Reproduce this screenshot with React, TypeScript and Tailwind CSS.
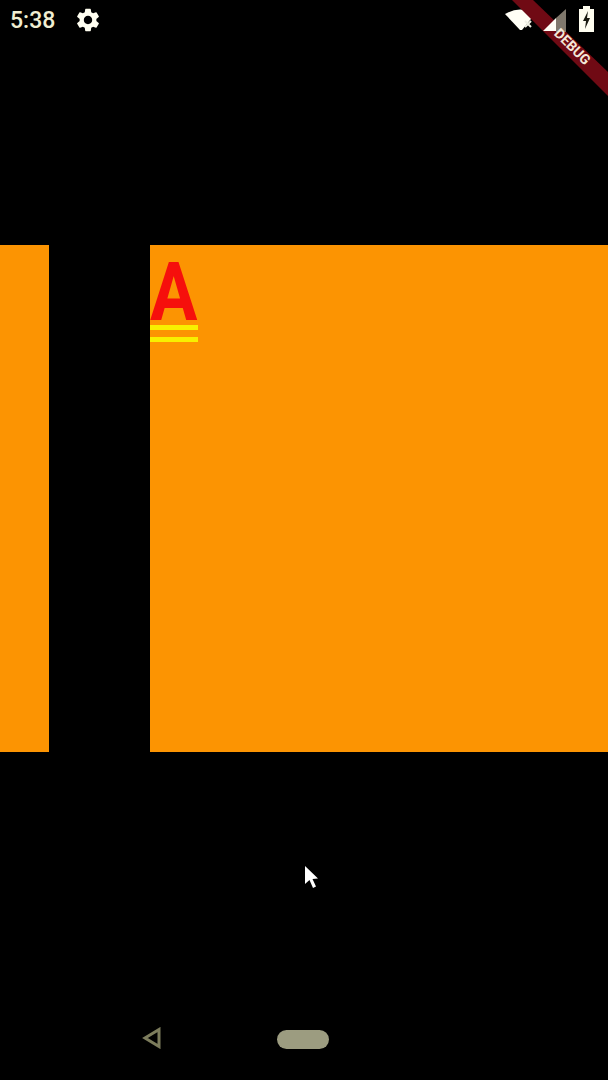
export default function App() {
  return (
    <div className="relative flex h-[1080px] w-[608px] flex-col overflow-hidden bg-black font-['Roboto',sans-serif]">
      <div className="h-[245px] shrink-0">
        <div className="flex h-[40px] items-center pl-[10px]">
          <span className="text-[23px] font-medium leading-none text-[#f0eed2]">5:38</span>
          <svg className="ml-[19px]" width="28" height="28" viewBox="0 0 24 24" fill="#fffef0">
            <path d="M19.14 12.94c.04-.3.06-.61.06-.94 0-.32-.02-.64-.07-.94l2.03-1.58a.49.49 0 0 0 .12-.61l-1.92-3.32a.488.488 0 0 0-.59-.22l-2.39.96c-.5-.38-1.03-.7-1.62-.94l-.36-2.54a.484.484 0 0 0-.48-.41h-3.84c-.24 0-.43.17-.47.41l-.36 2.54c-.59.24-1.13.57-1.62.94l-2.39-.96c-.22-.08-.47 0-.59.22L2.74 8.87c-.12.21-.08.47.12.61l2.03 1.58c-.05.3-.09.63-.09.94s.02.64.07.94l-2.03 1.58a.49.49 0 0 0-.12.61l1.92 3.32c.12.22.37.29.59.22l2.39-.96c.5.38 1.03.7 1.62.94l.36 2.54c.05.24.24.41.48.41h3.84c.24 0 .44-.17.47-.41l.36-2.54c.59-.24 1.13-.56 1.62-.94l2.39.96c.22.08.47 0 .59-.22l1.92-3.32c.12-.22.07-.47-.12-.61l-2.01-1.58zM12 15.6c-1.98 0-3.6-1.62-3.6-3.6s1.62-3.6 3.6-3.6 3.6 1.62 3.6 3.6-1.62 3.6-3.6 3.6z" />
          </svg>
        </div>
      </div>

      <div className="flex h-[507px] shrink-0 gap-[101px]">
        <div className="w-[49px] bg-[#fc9402]" />
        <div className="flex-1 bg-[#fc9402]">
          <div className="flex w-[48px] flex-col">
            <span className="mt-[10px] h-[70px] origin-left scale-x-[0.86] text-[82px] font-bold leading-[75px] text-[#f60f0c]">A</span>
            <div className="h-[5px] bg-[#f8f000]" />
            <div className="mt-[7px] h-[5px] bg-[#f8f000]" />
          </div>
        </div>
      </div>

      <div className="flex flex-1 items-end pb-[31px] pl-[142px]">
        <svg width="20" height="22" viewBox="0 0 20 22" fill="none" stroke="#7c7c5c" strokeWidth="3">
          <path d="M17 2.5 L3 11 L17 19.5 Z" />
        </svg>
        <div className="ml-[115px] h-[19px] w-[52px] rounded-full bg-[#9c9c80]" />
      </div>

      {/* Mouse pointer */}
      <svg className="absolute left-[303px] top-[865px]" width="17" height="25" viewBox="0 0 17 25">
        <path d="M2 1 L2 19 L6.5 15 L10 23 L13 21.5 L9.5 14 L15 13.5 Z" fill="#ffffff" />
      </svg>

      {/* Status icons and debug banner */}
      <svg className="absolute right-0 top-0" width="120" height="100" viewBox="488 0 120 100">
        <path d="M505 14 Q520 5 535 14 L522 30 L520 30 Z" fill="#fffef5" />
        <path d="M525 21 L531 27 M531 21 L525 27" stroke="#f0f0e4" strokeWidth="2" />
        <path d="M512 0 L533 0 L608 72 L608 96 Z" fill="#700a14" />
        <path d="M543 31 L556 18 L556 31 Z" fill="#fffef5" />
        <path d="M556 18 L566 9 L566 32 L556 32 Z" fill="#80786c" />
        <path d="M583 9 V6 H590 V9 H594 V32 H579 V9 Z" fill="#fffef0" />
        <path d="M588 11 L583 21 H586 L585 29 L590 18 H587 Z" fill="#1a1a10" />
        <text x="569" y="50" fill="#f4e8d8" fontSize="14" fontWeight="700" textAnchor="middle" transform="rotate(45 569 50)" fontFamily="Roboto, sans-serif">DEBUG</text>
      </svg>
    </div>
  );
}
